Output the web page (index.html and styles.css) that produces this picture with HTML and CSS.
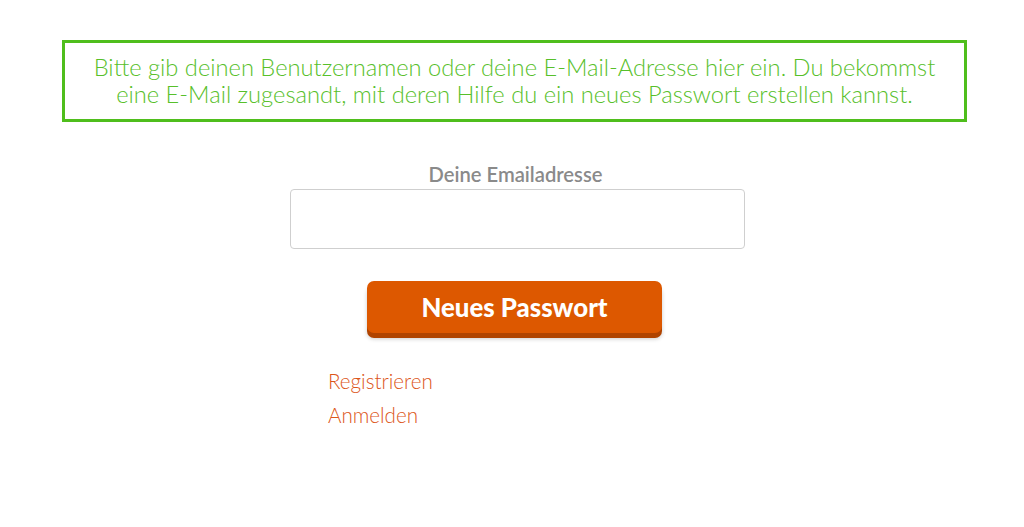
FILE: index.html
```html
<!DOCTYPE html>
<html lang="de">
<head>
    <meta charset="UTF-8">
    <meta name="viewport" content="width=device-width, initial-scale=1.0">
    <title>Passwort vergessen</title>
    <link rel="stylesheet" href="styles.css">
</head>
<body>
    <div class="page">
        <p class="notice">
            Bitte gib deinen Benutzernamen oder deine E-Mail-Adresse hier ein. Du bekommst<br>
            eine E-Mail zugesandt, mit deren Hilfe du ein neues Passwort erstellen kannst.
        </p>

        <form class="reset-form">
            <label for="email">Deine Emailadresse</label>
            <input type="text" id="email" name="email">
            <button type="submit">Neues Passwort</button>
        </form>

        <ul class="links">
            <li><a href="#">Registrieren</a></li>
            <li><a href="#">Anmelden</a></li>
        </ul>
    </div>
</body>
</html>
```

FILE: styles.css
```css
body {
    font-family: Lato, 'Open Sans', sans-serif;
    background-color: #fff;
    margin: 0;
    padding: 40px 0 0 62px;
    color: #333;
}
.page {
    width: 905px;
}
.notice {
    margin: 0;
    border: 3px solid #4fbe1c;
    padding: 11px 0 11px;
    text-align: center;
    color: #57c02a;
    font-size: 23.7px;
    font-weight: 300;
    line-height: 27px;
}
.reset-form {
    display: flex;
    flex-direction: column;
    align-items: center;
    margin-top: 40px;
}
label {
    display: block;
    font-weight: 600;
    font-size: 20.2px;
    color: #8a8a8a;
    margin-bottom: 3px;
    margin-left: 2px;
}
input[type="text"] {
    width: 455px;
    height: 60px;
    margin-left: 6px;
    border: 1px solid #cfcfcf;
    border-radius: 4px;
    box-sizing: border-box;
    font-size: 18px;
    padding: 0 12px;
}
button {
    margin-top: 32px;
    width: 295px;
    height: 52px;
    background-color: #dd5800;
    color: #fff;
    border: none;
    border-radius: 7px;
    box-shadow: 0 5px 0 #b04400, 0 6px 4px rgba(0,0,0,0.2);
    font-family: Lato, sans-serif;
    font-weight: 900;
    font-size: 25.8px;
    padding-bottom: 2px;
    cursor: pointer;
}
.links {
    list-style: none;
    margin: 31px 0 0 266px;
    padding: 0;
}
.links li {
    font-size: 20.6px;
    font-weight: 300;
    line-height: 34px;
}
.links a {
    color: #dc5518;
    text-decoration: none;
}
```
